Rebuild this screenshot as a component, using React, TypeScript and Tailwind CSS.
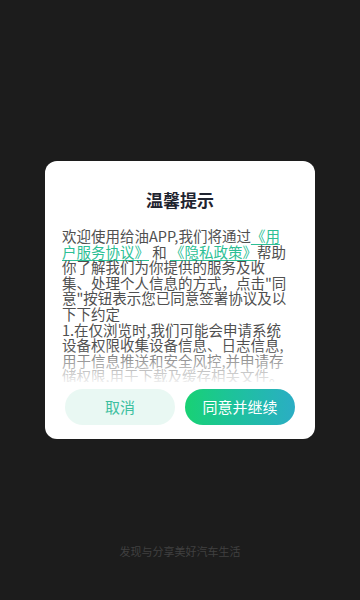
export default function App() {
  return (
    <div
      className="relative flex h-[600px] w-[360px] flex-col items-center bg-[#1c1c1c]"
      style={{ fontFamily: '"Noto Sans CJK SC", "Noto Sans", sans-serif' }}
    >
      {/* Dialog */}
      <div className="mt-[161px] flex h-[278px] w-[270px] flex-col rounded-[12px] bg-white">
        <h2 className="pt-[27px] text-center text-[17px] font-bold leading-[24px] text-[#1f2430]">
          温馨提示
        </h2>
        <div className="relative mt-[16px] h-[154px] overflow-hidden px-[17px]">
          <p className="w-[230px] text-[14.5px] leading-[15.6px] text-[#505050]">
            欢迎使用给油APP,我们将通过
            <span className="text-[#2dbf95] underline underline-offset-2">《用户服务协议》</span> 和{" "}
            <span className="text-[#2dbf95] underline underline-offset-2">《隐私政策》</span>帮助你了解我们为你提供的服务及收集、处理个人信息的方式，点击"同意"按钮表示您已同意签署协议及以下下约定
            <br />
            1.在仅浏览时,我们可能会申请系统设备权限收集设备信息、日志信息,用于信息推送和安全风控,并申请存储权限,用于下载及缓存相关文件。
            <br />
            2.我们可能会申请位置权限,用于帮助您查找附近的加油站及相关服务。
          </p>
          <div className="pointer-events-none absolute inset-x-0 bottom-0 h-[36px] bg-gradient-to-b from-white/0 via-white/50 to-white/90" />
        </div>
        <div className="mt-[7px] flex gap-[10px] px-[20px]">
          <button className="h-[36px] flex-1 rounded-full bg-[#e9f8f3] text-[15px] text-[#3dbf9f]">
            取消
          </button>
          <button className="h-[36px] flex-1 rounded-full bg-gradient-to-r from-[#19d173] to-[#2badc4] text-[15px] text-white">
            同意并继续
          </button>
        </div>
      </div>

      <p className="mt-auto mb-[41px] text-[11px] leading-[16px] text-[#404040]">
        发现与分享美好汽车生活
      </p>
    </div>
  );
}
